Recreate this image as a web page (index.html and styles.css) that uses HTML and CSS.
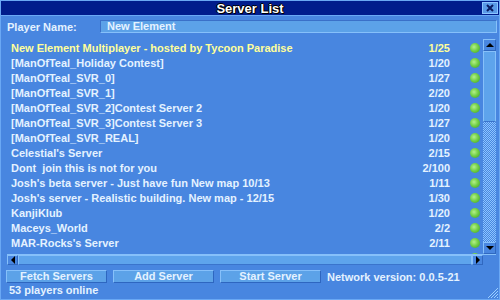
FILE: index.html
```html
<!DOCTYPE html>
<html>
<head>
  <title>Server List</title>
  <link rel="stylesheet" href="styles.css">
</head>
<body>
  <div class="window">
    <div class="titlebar">
      <span class="title">Server List</span>
      <span class="close-btn">
        <svg width="10" height="8" viewBox="0 0 10 8"><path d="M2 1 L8 7 M8 1 L2 7" stroke="#0a1a60" stroke-width="2"/></svg>
      </span>
    </div>

    <div class="name-row">
      <label class="name-label">Player Name:</label>
      <div class="name-input">New Element</div>
    </div>

    <div class="list-area">
      <div class="list">
        <div class="row own"><span class="srv">New Element Multiplayer - hosted by Tycoon Paradise</span><span class="count">1/25</span><span class="dot"></span></div>
        <div class="row"><span class="srv">[ManOfTeal_Holiday Contest]</span><span class="count">1/20</span><span class="dot"></span></div>
        <div class="row"><span class="srv">[ManOfTeal_SVR_0]</span><span class="count">1/27</span><span class="dot"></span></div>
        <div class="row"><span class="srv">[ManOfTeal_SVR_1]</span><span class="count">2/20</span><span class="dot"></span></div>
        <div class="row"><span class="srv">[ManOfTeal_SVR_2]Contest Server 2</span><span class="count">1/20</span><span class="dot"></span></div>
        <div class="row"><span class="srv">[ManOfTeal_SVR_3]Contest Server 3</span><span class="count">1/27</span><span class="dot"></span></div>
        <div class="row"><span class="srv">[ManOfTeal_SVR_REAL]</span><span class="count">1/20</span><span class="dot"></span></div>
        <div class="row"><span class="srv">Celestial's Server</span><span class="count">2/15</span><span class="dot"></span></div>
        <div class="row"><span class="srv">Dont  join this is not for you</span><span class="count">2/100</span><span class="dot"></span></div>
        <div class="row"><span class="srv">Josh's beta server - Just have fun New map 10/13</span><span class="count">1/11</span><span class="dot"></span></div>
        <div class="row"><span class="srv">Josh's server - Realistic building. New map - 12/15</span><span class="count">1/30</span><span class="dot"></span></div>
        <div class="row"><span class="srv">KanjiKlub</span><span class="count">1/20</span><span class="dot"></span></div>
        <div class="row"><span class="srv">Maceys_World</span><span class="count">2/2</span><span class="dot"></span></div>
        <div class="row"><span class="srv">MAR-Rocks's Server</span><span class="count">2/11</span><span class="dot"></span></div>
        <div class="row"><span class="srv">Mega's Economic [TX]</span><span class="count">1/24</span><span class="dot"></span></div>
      </div>
      <div class="vscroll">
        <div class="sb-btn"><span class="arrow up"></span></div>
        <div class="vthumb"></div>
        <div class="vtrack"></div>
        <div class="sb-btn"><span class="arrow down"></span></div>
      </div>
    </div>

    <div class="hscroll-row">
      <div class="hscroll">
        <div class="sb-btn"><span class="arrow left"></span></div>
        <div class="hthumb"></div>
        <div class="sb-btn"><span class="arrow right"></span></div>
      </div>
      <div class="corner"></div>
    </div>

    <div class="button-row">
      <button class="btn">Fetch Servers</button>
      <button class="btn">Add Server</button>
      <button class="btn">Start Server</button>
      <span class="version">Network version: 0.0.5-21</span>
    </div>

    <div class="status-row">
      <span class="status">53 players online</span>
      <svg class="grip" width="12" height="12" viewBox="0 0 12 12">
        <path d="M11 1 L1 11 M11 4 L4 11 M11 7 L7 11 M11 10 L10 11" stroke="#9cd0ff" stroke-width="1"/>
      </svg>
    </div>
  </div>
</body>
</html>
```

FILE: styles.css
```css
body {
  margin: 0;
  background: #4886e0;
  font-family: "Liberation Sans", Arial, sans-serif;
  font-weight: bold;
  font-size: 11px;
  color: #e4f2ff;
}
.window {
  width: 498px;
  height: 298px;
  border: 1px solid #6aa8f4;
  display: flex;
  flex-direction: column;
  background: #4886e0;
}
.titlebar {
  height: 14px;
  background: #001c8c;
  border-bottom: 1px solid #6aa8f4;
  display: flex;
  align-items: center;
  justify-content: center;
  position: relative;
}
.title {
  font-size: 13px;
  color: #fff;
  text-shadow: 1px 1px 0 #000, -1px 0 0 #000, 0 -1px 0 #000, 1px 0 0 #000;
}
.close-btn {
  position: absolute;
  right: 1px;
  top: 1px;
  width: 14px;
  height: 10px;
  background: #5a9ae8;
  border: 1px solid #8cc4ff;
  display: flex;
  align-items: center;
  justify-content: center;
}
.name-row {
  display: flex;
  align-items: center;
  height: 21px;
  padding: 0 2px 0 6px;
}
.name-label {
  width: 93px;
}
.name-input {
  flex: 1;
  height: 11px;
  line-height: 11px;
  padding-left: 6px;
  background: #5ca2e8;
  border: 1px solid #86c0fa;
  border-top-color: #3a70c8;
  border-left-color: #3a70c8;
}
.list-area {
  display: flex;
  height: 215px;
  margin-top: 2px;
  padding-left: 6px;
}
.list {
  flex: 1;
  overflow: hidden;
  padding: 1px 0 0 4px;
}
.row {
  display: flex;
  align-items: center;
  height: 15px;
  white-space: nowrap;
}
.row.own {
  color: #ffff9a;
}
.srv {
  flex: 1;
  overflow: hidden;
  white-space: pre;
}
.count {
  width: 60px;
  text-align: right;
}
.dot {
  width: 10px;
  height: 10px;
  margin: 0 3px 0 20px;
  border-radius: 50%;
  background: radial-gradient(circle at 40% 40%, #b4f08a 0, #74d048 45%, #3aa01e 100%);
}
.vscroll {
  width: 13px;
  display: flex;
  flex-direction: column;
  margin-right: 3px;
}
.sb-btn {
  width: 11px;
  height: 10px;
  background: #4886e0;
  border: 1px solid #86c0fa;
  border-right-color: #3068c0;
  border-bottom-color: #3068c0;
  display: flex;
  align-items: center;
  justify-content: center;
}
.vthumb {
  height: 69px;
  background: #5ea4ec;
  border: 1px solid #86c0fa;
  border-bottom-color: #3a74cc;
}
.vtrack {
  flex: 1;
  background: repeating-conic-gradient(#8cc4ff 0 25%, #4886e0 0 50%) 0 0 / 2px 2px;
}
.arrow {
  width: 0;
  height: 0;
  border: 4px solid transparent;
}
.arrow.up {
  border-bottom-color: #000;
  border-top-width: 0;
}
.arrow.down {
  border-top-color: #000;
  border-bottom-width: 0;
}
.arrow.left {
  border-right-color: #000;
  border-left-width: 0;
}
.arrow.right {
  border-left-color: #000;
  border-right-width: 0;
}
.hscroll-row {
  display: flex;
  height: 11px;
  padding-left: 6px;
}
.hscroll {
  flex: 1;
  display: flex;
  border-top: 1px solid #86c0fa;
}
.hscroll .sb-btn {
  height: 8px;
  width: 9px;
}
.hthumb {
  flex: 1;
  background: #5ea4ec;
  border: 1px solid #86c0fa;
  border-bottom-color: #3a74cc;
}
.corner {
  width: 13px;
  margin-right: 3px;
  border-top: 1px solid #86c0fa;
}
.button-row {
  display: flex;
  align-items: center;
  gap: 6px;
  margin-top: 5px;
  padding-left: 5px;
  height: 13px;
}
.btn {
  width: 101px;
  height: 13px;
  padding: 0;
  font-family: inherit;
  font-weight: bold;
  font-size: 11px;
  line-height: 11px;
  color: #e4f2ff;
  background: #5ca2e8;
  border: 1px solid #86c0fa;
  border-right-color: #2e66c0;
  border-bottom-color: #2e66c0;
}
.version {
  margin-left: 0;
}
.status-row {
  display: flex;
  align-items: flex-end;
  justify-content: space-between;
  flex: 1;
  padding: 0 0 0 8px;
}
.status {
  margin-bottom: 3px;
}
```
